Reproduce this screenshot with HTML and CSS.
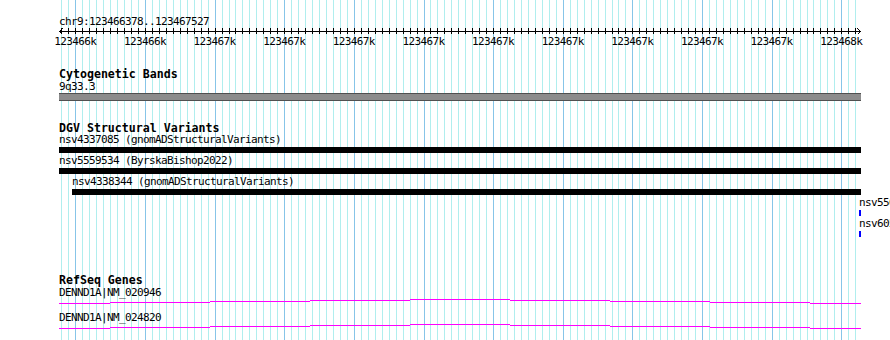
FILE: index.html
```html
<html>
<head>
	<title>chr9:123466378..123467527</title>
	<link rel="stylesheet" href="styles.css">
</head>
<body>
	<div class="panel">
		<svg id="grid" class="grid" width="890" height="340"></svg>

		<div class="locus">chr9:123466378..123467527</div>
		<svg id="ruler" class="ruler" width="890" height="7"></svg>
		<div class="ticklabels">
			<span>123466k</span><span>123466k</span><span>123467k</span><span>123467k</span>
			<span>123467k</span><span>123467k</span><span>123467k</span><span>123467k</span>
			<span>123467k</span><span>123467k</span><span>123467k</span><span>123468k</span>
		</div>

		<div class="track cyto">
			<div class="tracktitle">Cytogenetic Bands</div>
			<div class="label">9q33.3</div>
			<div class="band"></div>
		</div>

		<div class="track dgv">
			<div class="tracktitle">DGV Structural Variants</div>
			<div class="feature">
				<div class="label">nsv4337085 (gnomADStructuralVariants)</div>
				<div class="bar"></div>
			</div>
			<div class="feature">
				<div class="label">nsv5559534 (ByrskaBishop2022)</div>
				<div class="bar"></div>
			</div>
			<div class="feature">
				<div class="label" style="margin-left: 13px">nsv4338344 (gnomADStructuralVariants)</div>
				<div class="bar" style="margin-left: 13px; width: 789px"></div>
			</div>
			<div class="feature">
				<div class="label" style="margin-left: 800px">nsv5560812 (ByrskaBishop2022)</div>
				<div class="bar small" style="margin-left: 800px"></div>
			</div>
			<div class="feature">
				<div class="label" style="margin-left: 800px">nsv6059131 (gnomADStructuralVariants)</div>
				<div class="bar small" style="margin-left: 800px"></div>
			</div>
		</div>

		<div class="track refseq">
			<div class="tracktitle">RefSeq Genes</div>
			<div class="gene">
				<div class="label">DENND1A|NM_020946</div>
				<svg class="transcript" width="802" height="6"></svg>
			</div>
			<div class="gene">
				<div class="label">DENND1A|NM_024820</div>
				<svg class="transcript" width="802" height="6"></svg>
			</div>
		</div>
	</div>

	<script type="text/javascript">
		var SVGNS = "http://www.w3.org/2000/svg";

		function addRect(svg, x, y, w, h, color) {
			var r = document.createElementNS(SVGNS, "rect");
			r.setAttribute("x", x);
			r.setAttribute("y", y);
			r.setAttribute("width", w);
			r.setAttribute("height", h);
			r.setAttribute("fill", color);
			svg.appendChild(r);
		}

		// grid + ruler ticks, one every 10bp, a darker one every 100bp
		var grid = document.getElementById("grid");
		var ruler = document.getElementById("ruler");
		for (var j = -2; ; j++) {
			var x = Math.round(75.3 + 6.964 * j);
			if (x > 861)
				break;
			addRect(grid, x, 0, 1, 340, j % 10 == 0 ? "#87c5e8" : "#b0eeee");
			addRect(ruler, x, 0, 1, 6, "#000");
		}
		addRect(ruler, 59, 3, 802, 1, "#000");
		var arrows = document.createElementNS(SVGNS, "path");
		arrows.setAttribute("d", "M62.5 0.5 L59.5 3.5 L62.5 6.5 M857.5 0.5 L860.5 3.5 L857.5 6.5");
		arrows.setAttribute("class", "arrows");
		ruler.appendChild(arrows);

		// transcript coverage steps: [start, end, y]
		var steps = [[0, 51, 5], [51, 151, 4], [151, 251, 3], [251, 351, 2], [351, 451, 1],
			[451, 551, 2], [551, 651, 3], [651, 751, 4], [751, 802, 5]];
		var transcripts = document.getElementsByClassName("transcript");
		for (var t = 0; t < transcripts.length; t++) {
			for (var s = 0; s < steps.length; s++)
				addRect(transcripts[t], steps[s][0], steps[s][2], steps[s][1] - steps[s][0], 1, "#ff00ff");
		}
	</script>
</body>
</html>
```

FILE: styles.css
```css
html, body {
	margin: 0;
	overflow: hidden;
	background-color: white;
}

.panel {
	position: relative;
	z-index: 0;
	width: 890px;
	height: 340px;
	overflow: hidden;
	font-family: "DejaVu Sans Mono", monospace;
	font-size: 11px;
	letter-spacing: -0.62px;
	color: black;
}

.grid {
	position: absolute;
	top: 0;
	left: 0;
	z-index: -1;
	shape-rendering: crispEdges;
}

.locus {
	padding-top: 16px;
	padding-left: 59px;
	line-height: 12px;
}

.ruler {
	display: block;
	shape-rendering: crispEdges;
}

.arrows {
	fill: none;
	stroke: black;
	stroke-width: 1;
}

.ticklabels {
	display: flex;
	gap: 27.64px;
	padding-left: 54.3px;
	line-height: 13px;
}

.ticklabels span {
	width: 42px;
	text-align: center;
	white-space: nowrap;
}

.track {
	padding-left: 59px;
}

.tracktitle {
	font-weight: bold;
	font-size: 11.6px;
	letter-spacing: 0;
	line-height: 12px;
	white-space: nowrap;
}

.label {
	line-height: 12px;
	white-space: nowrap;
}

.cyto {
	padding-top: 20px;
}

.cyto .label {
	line-height: 13px;
}

.band {
	width: 802px;
	height: 6px;
	background-color: #8c8c8c;
	border-top: 1px solid #505050;
	border-bottom: 1px solid #505050;
}

.dgv {
	padding-top: 21px;
}

.feature {
	margin-bottom: 2px;
}

.bar {
	margin-top: 1px;
	width: 802px;
	height: 6px;
	background-color: black;
}

.bar.small {
	width: 2px;
	background-color: #0000ff;
}

.refseq {
	padding-top: 35px;
}

.refseq .tracktitle {
	margin-bottom: 1px;
}

.gene {
	margin-bottom: 8px;
}

.transcript {
	display: block;
	margin-top: -1px;
	shape-rendering: crispEdges;
}
```
